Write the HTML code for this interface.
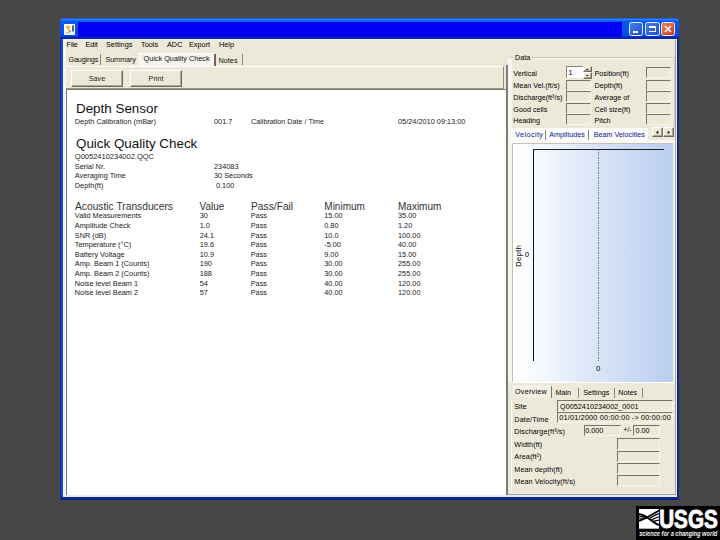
<!DOCTYPE html>
<html>
<head>
<meta charset="utf-8">
<title>Quick Quality Check</title>
<style>
html,body{margin:0;padding:0;}
body{width:720px;height:540px;background:#474747;position:relative;overflow:hidden;font-family:"Liberation Sans",sans-serif;font-size:6.7px;color:#222;}
.a{position:absolute;white-space:nowrap;line-height:1;}
#win{left:60px;top:19px;width:619.2px;height:480.6px;background:#122489;border-radius:4px 4px 0 0;}
#winl{left:60px;top:30px;width:3px;height:467px;background:linear-gradient(90deg,#0c2aa8,#1746d2 40%,#1746d2);}
#inner{left:63px;top:39px;width:614px;height:457.8px;background:#e6eefc;}
#titlebar{left:60px;top:18.3px;width:619.2px;height:20.7px;border-radius:3.5px 3.5px 0 0;background:linear-gradient(#1444c8 0,#2f86ff 1.3px,#0d64f6 2.6px,#0a56ee 4px,#0a4ce6 17.5px,#0a34c8 18.6px,#08279c 19.5px,#0a2cb0 20.7px);}
#titlefill{left:78px;top:22px;width:544px;height:15px;background:#0000f4;}
#client{left:63px;top:40.1px;width:612.6px;height:455.1px;background:#ece9d8;border-right:1px solid #a3a39c;border-bottom:1px solid #a3a39c;box-sizing:border-box;}
.t{color:#1a1a1a;}
.menu{top:41.2px;font-size:7.3px;color:#000;}
.tab{top:56.4px;font-size:7.3px;color:#111;}
.sep{width:1px;background:#8a887c;}
.btn{background:#ece9d8;border:1px solid #fff;border-right-color:#6d6b60;border-bottom-color:#6d6b60;box-shadow:inset -1px -1px 0 #aca899;box-sizing:border-box;text-align:center;font-size:7.2px;color:#222;}
#panel{left:66px;top:89px;width:439.6px;height:405.5px;background:#fff;border-left:1px solid #7d7b70;border-top:1px solid #7d7b70;box-sizing:border-box;}
.h1{font-size:13.4px;color:#111;}
.h2{font-size:10.25px;color:#333;}
.r{font-size:7.35px;color:#222;}
.box{background:#ece9d8;border-top:1px solid #77756a;border-left:1px solid #77756a;border-right:1px solid #f7f6ee;border-bottom:1px solid #f7f6ee;box-sizing:border-box;}
.lbl{font-size:7.2px;color:#000;}
.bl{font-size:7.2px;color:#0a1596;}
</style>
</head>
<body>
<div class="a" id="win"></div>
<div class="a" id="winl"></div>
<div class="a" id="inner"></div>
<div class="a" id="titlebar"></div>
<div class="a" id="titlefill"></div>
<div class="a" id="client"></div>

<div class="a" style="left:63px;top:39.5px;width:3px;height:456.5px;background:#f7f6f1;"></div>
<!-- app icon -->
<div class="a" style="left:64px;top:24px;width:11.3px;height:10.8px;background:linear-gradient(#fbfbfa 55%,#d8ecfb);"></div>
<svg class="a" style="left:64px;top:24px;" width="12" height="11" viewBox="0 0 12 11"><path d="M1.5 2.5 L5 1.2 L6.2 3 L4.6 6.5 L3.2 5 Z" fill="#f0c020"/><rect x="8" y="1.5" width="2" height="6" fill="#55606a"/><path d="M2.5 8.5 L6 8.2" stroke="#c9a020" stroke-width="0.8"/><path d="M5 6 L6.5 8" stroke="#333" stroke-width="0.9"/></svg>

<!-- title buttons -->
<div class="a" style="left:629px;top:22px;width:14px;height:14px;border-radius:2.5px;border:1px solid #e8eefc;box-sizing:border-box;background:linear-gradient(135deg,#4a7df0,#1e4fd0);"></div>
<div class="a" style="left:633px;top:31px;width:5px;height:2px;background:#fff;"></div>
<div class="a" style="left:645px;top:22px;width:15px;height:14px;border-radius:2.5px;border:1px solid #e8eefc;box-sizing:border-box;background:linear-gradient(135deg,#4a7df0,#1e4fd0);"></div>
<div class="a" style="left:649px;top:26px;width:7px;height:6px;border:1px solid #fff;border-top-width:2px;border-left-width:0;box-sizing:border-box;"></div>
<div class="a" style="left:661px;top:22px;width:14px;height:14px;border-radius:2.5px;border:1px solid #f4e4e0;box-sizing:border-box;background:linear-gradient(135deg,#e8835c,#c8381c);"></div>
<svg class="a" style="left:661px;top:22px;" width="14" height="14" viewBox="0 0 14 14"><path d="M4 4 L10 10 M10 4 L4 10" stroke="#fff" stroke-width="1.6"/></svg>

<!-- menu -->
<div class="a menu" style="left:66.6px;letter-spacing:-0.15px;">File</div>
<div class="a menu" style="left:85.6px;letter-spacing:-0.1px;">Edit</div>
<div class="a menu" style="left:106px;">Settings</div>
<div class="a menu" style="left:141px;">Tools</div>
<div class="a menu" style="left:167px;">ADC</div>
<div class="a menu" style="left:189px;">Export</div>
<div class="a menu" style="left:219px;">Help</div>

<!-- left tabs -->
<div class="a" style="left:138px;top:52.5px;width:76px;height:14px;background:#f5f4ee;border-top:1px solid #fff;box-sizing:border-box;"></div>
<div class="a tab" style="left:68.4px;letter-spacing:-0.18px;">Gaugings</div>
<div class="a sep" style="left:100px;top:54px;height:11px;"></div>
<div class="a tab" style="left:105.4px;letter-spacing:-0.12px;">Summary</div>
<div class="a tab" style="left:143.5px;top:54.6px;">Quick Quality Check</div>
<div class="a" style="left:214px;top:53.5px;width:1.5px;height:12px;background:#6b695f;"></div>
<div class="a tab" style="left:218.5px;top:56.9px;">Notes</div>
<div class="a sep" style="left:242px;top:54px;height:11px;"></div>

<!-- toolbar -->
<div class="a" style="left:66px;top:65.8px;width:438.2px;height:22.9px;border-top:1px solid #fff;border-right:1.2px solid #8d8b7f;border-bottom:1px solid #9a988c;box-sizing:border-box;"></div>
<div class="a btn" style="left:71px;top:70px;width:52px;height:17px;line-height:15px;">Save</div>
<div class="a btn" style="left:130px;top:70px;width:52px;height:17px;line-height:15px;">Print</div>

<!-- report panel -->
<div class="a" id="panel"></div>
<div class="a h1" style="left:76px;top:102.2px;">Depth Sensor</div>
<div class="a r" style="left:74.8px;top:118px;">Depth Calibration (mBar)</div>
<div class="a r" style="left:214px;top:118px;">001.7</div>
<div class="a r" style="left:251px;top:118px;font-size:7.2px;">Calibration Date / Time</div>
<div class="a r" style="left:398px;top:118px;">05/24/2010 09:13:00</div>

<div class="a h1" style="left:76px;top:136.7px;">Quick Quality Check</div>
<div class="a r" style="left:74.8px;top:152.6px;font-size:7.5px;">Q0052410234002.QQC</div>
<div class="a r" style="left:74.8px;top:162.5px;">Serial Nr.</div>
<div class="a r" style="left:214px;top:162.5px;">234083</div>
<div class="a r" style="left:74.8px;top:172px;">Averaging Time</div>
<div class="a r" style="left:214px;top:172px;">30 Seconds</div>
<div class="a r" style="left:74.8px;top:182px;">Depth(ft)</div>
<div class="a r" style="left:216px;top:182px;">0.100</div>

<div class="a h2" style="left:75px;top:201.6px;">Acoustic Transducers</div>
<div class="a h2" style="left:199.6px;top:201.6px;font-size:10px;">Value</div>
<div class="a h2" style="left:251px;top:201.6px;">Pass/Fail</div>
<div class="a h2" style="left:324.3px;top:201.6px;font-size:10px;">Minimum</div>
<div class="a h2" style="left:398px;top:201.6px;font-size:10px;">Maximum</div>
<!-- table rows -->
<div class="a r" style="left:74.8px;top:212.30px;">Valid Measurements</div>
<div class="a r" style="left:199.7px;top:212.30px;">30</div>
<div class="a r" style="left:250.7px;top:212.30px;">Pass</div>
<div class="a r" style="left:324.2px;top:212.30px;">15.00</div>
<div class="a r" style="left:398px;top:212.30px;">35.00</div>
<div class="a r" style="left:74.8px;top:221.93px;">Amplitude Check</div>
<div class="a r" style="left:199.7px;top:221.93px;">1.0</div>
<div class="a r" style="left:250.7px;top:221.93px;">Pass</div>
<div class="a r" style="left:324.2px;top:221.93px;">0.80</div>
<div class="a r" style="left:398px;top:221.93px;">1.20</div>
<div class="a r" style="left:74.8px;top:231.56px;">SNR (dB)</div>
<div class="a r" style="left:199.7px;top:231.56px;">24.1</div>
<div class="a r" style="left:250.7px;top:231.56px;">Pass</div>
<div class="a r" style="left:324.2px;top:231.56px;">10.0</div>
<div class="a r" style="left:398px;top:231.56px;">100.00</div>
<div class="a r" style="left:74.8px;top:241.19px;">Temperature (°C)</div>
<div class="a r" style="left:199.7px;top:241.19px;">19.6</div>
<div class="a r" style="left:250.7px;top:241.19px;">Pass</div>
<div class="a r" style="left:324.2px;top:241.19px;">-5.00</div>
<div class="a r" style="left:398px;top:241.19px;">40.00</div>
<div class="a r" style="left:74.8px;top:250.82px;">Battery Voltage</div>
<div class="a r" style="left:199.7px;top:250.82px;">10.9</div>
<div class="a r" style="left:250.7px;top:250.82px;">Pass</div>
<div class="a r" style="left:324.2px;top:250.82px;">9.00</div>
<div class="a r" style="left:398px;top:250.82px;">15.00</div>
<div class="a r" style="left:74.8px;top:260.45px;">Amp. Beam 1 (Counts)</div>
<div class="a r" style="left:199.7px;top:260.45px;">190</div>
<div class="a r" style="left:250.7px;top:260.45px;">Pass</div>
<div class="a r" style="left:324.2px;top:260.45px;">30.00</div>
<div class="a r" style="left:398px;top:260.45px;">255.00</div>
<div class="a r" style="left:74.8px;top:270.08px;">Amp. Beam 2 (Counts)</div>
<div class="a r" style="left:199.7px;top:270.08px;">188</div>
<div class="a r" style="left:250.7px;top:270.08px;">Pass</div>
<div class="a r" style="left:324.2px;top:270.08px;">30.00</div>
<div class="a r" style="left:398px;top:270.08px;">255.00</div>
<div class="a r" style="left:74.8px;top:279.71px;">Noise level Beam 1</div>
<div class="a r" style="left:199.7px;top:279.71px;">54</div>
<div class="a r" style="left:250.7px;top:279.71px;">Pass</div>
<div class="a r" style="left:324.2px;top:279.71px;">40.00</div>
<div class="a r" style="left:398px;top:279.71px;">120.00</div>
<div class="a r" style="left:74.8px;top:289.34px;">Noise level Beam 2</div>
<div class="a r" style="left:199.7px;top:289.34px;">57</div>
<div class="a r" style="left:250.7px;top:289.34px;">Pass</div>
<div class="a r" style="left:324.2px;top:289.34px;">40.00</div>
<div class="a r" style="left:398px;top:289.34px;">120.00</div>
<!-- splitter -->
<div class="a" style="left:506.4px;top:65px;width:1.2px;height:429.5px;background:#807e72;"></div>

<!-- Data group -->
<div class="a" style="left:507.8px;top:56.5px;width:167.5px;height:72px;border-top:1px solid #c9c6b6;border-right:1px solid #cfccbc;border-left:4.2px solid #f7f6f0;box-sizing:border-box;box-shadow:inset 0 1px 0 #fbfaf5;"></div>
<div class="a lbl" style="left:514px;top:53.8px;background:#ece9d8;padding:0 1px;">Data</div>

<div class="a lbl" style="left:513.3px;top:69.8px;">Vertical</div>
<div class="a lbl" style="left:513.3px;top:82px;">Mean Vel.(ft/s)</div>
<div class="a lbl" style="left:513.3px;top:94px;">Discharge(ft³/s)</div>
<div class="a lbl" style="left:513.3px;top:106.2px;">Good cells</div>
<div class="a lbl" style="left:513.3px;top:117.2px;">Heading</div>

<div class="a" style="left:565.5px;top:65.8px;width:17.5px;height:12.7px;background:#fff;border-top:1px solid #8a887c;border-left:1px solid #8a887c;box-sizing:border-box;"></div>
<div class="a lbl" style="left:568.5px;top:68.8px;">1</div>
<div class="a btn" style="left:583.3px;top:65.8px;width:8.7px;height:6.3px;"></div>
<div class="a btn" style="left:583.3px;top:72.4px;width:8.7px;height:6.6px;"></div>
<svg class="a" style="left:583.3px;top:65.8px;" width="9" height="13" viewBox="0 0 9 13"><path d="M2.8 4 L4.3 2.4 L5.8 4 Z M2.8 9 L4.3 10.6 L5.8 9 Z" fill="#111"/></svg>
<div class="a box" style="left:565.6px;top:79.9px;width:25.4px;height:11px;"></div>
<div class="a box" style="left:565.6px;top:91.4px;width:25.4px;height:11px;"></div>
<div class="a box" style="left:565.6px;top:103.1px;width:25.4px;height:11px;"></div>
<div class="a box" style="left:565.6px;top:113.9px;width:25.4px;height:11px;"></div>

<div class="a lbl" style="left:594.5px;top:69.8px;">Position(ft)</div>
<div class="a lbl" style="left:594.5px;top:82px;">Depth(ft)</div>
<div class="a lbl" style="left:594.5px;top:94px;">Average of</div>
<div class="a lbl" style="left:594.5px;top:106.2px;">Cell size(ft)</div>
<div class="a lbl" style="left:594.5px;top:117.2px;">Pitch</div>

<div class="a box" style="left:645.6px;top:66.7px;width:25.6px;height:11px;"></div>
<div class="a box" style="left:645.6px;top:79.9px;width:25.6px;height:11px;"></div>
<div class="a box" style="left:645.6px;top:91.4px;width:25.6px;height:11px;"></div>
<div class="a box" style="left:645.6px;top:103.1px;width:25.6px;height:11px;"></div>
<div class="a box" style="left:645.6px;top:113.9px;width:25.6px;height:11px;"></div>

<div class="a" style="left:507.8px;top:128px;width:4.2px;height:254px;background:#f5f4ee;"></div>
<div class="a" style="left:511.3px;top:398px;width:1px;height:96px;background:#f8f8f3;"></div>
<!-- chart tabs -->
<div class="a" style="left:511px;top:128.3px;width:137.3px;height:13px;background:#fcfcfa;"></div>
<div class="a bl" style="left:515.3px;top:131.2px;letter-spacing:0.4px;">Velocity</div>
<div class="a sep" style="left:545.4px;top:130px;height:10px;"></div>
<div class="a bl" style="left:549.2px;top:131.2px;">Amplitudes</div>
<div class="a sep" style="left:588.4px;top:130px;height:10px;"></div>
<div class="a bl" style="left:593.7px;top:131.2px;">Beam Velocities</div>
<div class="a btn" style="left:652px;top:126.7px;width:10.5px;height:10.8px;"></div>
<div class="a btn" style="left:663.3px;top:126.7px;width:10.7px;height:10.8px;"></div>
<svg class="a" style="left:652px;top:126.7px;" width="22" height="11" viewBox="0 0 22 11"><path d="M6.3 3.5 L4 5.4 L6.3 7.3 Z M15.7 3.5 L18 5.4 L15.7 7.3 Z" fill="#111"/></svg>

<div class="a" style="left:511px;top:139.8px;width:163.6px;height:3.2px;background:#f8f8f4;"></div>
<div class="a" style="left:672px;top:143px;width:2.6px;height:239px;background:#f3f2ea;"></div>
<!-- chart -->
<div class="a" style="left:512px;top:142.5px;width:160.5px;height:239.5px;background:linear-gradient(90deg,#ffffff 0%,#f2f6fd 20%,#d4e0f6 60%,#b9cdef 100%);border-top:1px solid #c4c2b6;border-left:1px solid #c4c2b6;box-sizing:border-box;"></div>
<div class="a" style="left:533px;top:149px;width:131px;height:1px;background:#222;"></div>
<div class="a" style="left:532.8px;top:149px;width:1.2px;height:212px;background:#111;"></div>
<div class="a" style="left:597.8px;top:150px;width:0.9px;height:211px;background:repeating-linear-gradient(180deg,#707a8c 0,#707a8c 1.3px,transparent 1.3px,transparent 2.5px);"></div>
<div class="a lbl" style="left:507px;top:251.6px;width:24px;text-align:center;transform:rotate(-90deg);font-size:7.4px;letter-spacing:0.45px;">Depth</div>
<div class="a lbl" style="left:524.7px;top:251px;font-size:7.8px;">0</div>
<div class="a lbl" style="left:596px;top:365px;font-size:7.8px;">0</div>

<!-- bottom tabs -->
<div class="a" style="left:511px;top:382px;width:163px;height:1px;background:#fff;"></div>
<div class="a" style="left:512px;top:385.5px;width:39px;height:12.5px;background:#f1efe4;border-top:1px solid #fbfbf8;box-sizing:border-box;"></div>
<div class="a lbl" style="left:515px;top:388.2px;letter-spacing:0.25px;">Overview</div>
<div class="a" style="left:551px;top:386px;width:1.3px;height:12px;background:#77756a;"></div>
<div class="a lbl" style="left:555.5px;top:389.3px;">Main</div>
<div class="a sep" style="left:578.3px;top:388px;height:10px;"></div>
<div class="a lbl" style="left:583.3px;top:389.3px;">Settings</div>
<div class="a sep" style="left:613.6px;top:388px;height:10px;"></div>
<div class="a lbl" style="left:618.3px;top:389.3px;">Notes</div>
<div class="a sep" style="left:642px;top:388px;height:10px;"></div>

<!-- overview fields -->
<div class="a lbl" style="left:514.3px;top:403.2px;">Site</div>
<div class="a box" style="left:557.3px;top:400px;width:115.5px;height:11.5px;"></div>
<div class="a lbl" style="left:560px;top:402.6px;letter-spacing:0.05px;">Q0052410234002_0001</div>
<div class="a lbl" style="left:514.3px;top:415.8px;letter-spacing:0.15px;">Date/Time</div>
<div class="a box" style="left:557.3px;top:412px;width:115.5px;height:11px;"></div>
<div class="a lbl" style="left:559.3px;top:414.4px;letter-spacing:0.23px;">01/01/2000 00:00:00 -&gt; 00:00:00</div>
<div class="a lbl" style="left:514.3px;top:427.8px;letter-spacing:0.1px;">Discharge(ft³/s)</div>
<div class="a box" style="left:583.5px;top:424.8px;width:37.5px;height:11.6px;"></div>
<div class="a lbl" style="left:585.2px;top:427.4px;">0.000</div>
<div class="a lbl" style="left:623.6px;top:427.4px;font-size:6.6px;">+/-</div>
<div class="a box" style="left:633px;top:424.8px;width:27.2px;height:11.6px;"></div>
<div class="a lbl" style="left:635.6px;top:427.4px;">0.00</div>
<div class="a lbl" style="left:514.3px;top:440.8px;letter-spacing:0.1px;">Width(ft)</div>
<div class="a box" style="left:617px;top:438.3px;width:43.2px;height:12px;"></div>
<div class="a lbl" style="left:514.3px;top:453.2px;letter-spacing:0.1px;">Area(ft²)</div>
<div class="a box" style="left:617px;top:451px;width:43.2px;height:11.2px;"></div>
<div class="a lbl" style="left:514.3px;top:466px;letter-spacing:0.1px;">Mean depth(ft)</div>
<div class="a box" style="left:617px;top:462.7px;width:43.2px;height:11.6px;"></div>
<div class="a lbl" style="left:514.3px;top:478.4px;letter-spacing:0.1px;">Mean Velocity(ft/s)</div>
<div class="a box" style="left:617px;top:474.8px;width:43.2px;height:11.6px;"></div>

<!-- USGS logo -->
<div class="a" style="left:636.3px;top:505.6px;width:84px;height:35px;background:#000;"></div>
<svg class="a" style="left:638.7px;top:509px;" width="82" height="31" viewBox="0 0 82 31">
<rect x="0" y="0" width="20" height="19.7" fill="#fff"/>
<g fill="none" stroke="#000" stroke-linecap="butt">
<path d="M0 11.9 C3 10.6 5.5 9.4 8 8.3 C10.5 7.2 16 3.9 20 1.5" stroke-width="1.9"/>
<path d="M0 5 C3 5.4 5.5 6.4 8 8.3 C11 10.6 15.5 14.4 20 16.2" stroke-width="1.9"/>
<path d="M0 7.1 C3 7.4 5.5 8 8.2 9.2" stroke-width="1.2"/>
<path d="M0 9.2 C2.5 9.1 4.5 9.2 7 9.8" stroke-width="1"/>
<path d="M11 9.2 C14 7.4 17 5.4 20 4.6" stroke-width="1.3"/>
<path d="M12.6 10.9 C15.5 9.4 17.5 8.3 20 7.9" stroke-width="1.3"/>
<path d="M14 12.6 C16.5 11.5 18 11.2 20 11.1" stroke-width="1.3"/>
</g>
<text x="20.2" y="18.6" font-family="Liberation Sans, sans-serif" font-weight="bold" font-size="25.6" fill="#fff" textLength="58.6" lengthAdjust="spacingAndGlyphs" stroke="#fff" stroke-width="0.9">USGS</text>
<text x="0.2" y="26.6" font-family="Liberation Sans, sans-serif" font-style="italic" font-weight="bold" font-size="6.3" fill="#f4f4f4" textLength="78" lengthAdjust="spacingAndGlyphs">science for a changing world</text>
</svg>
</body>
</html>
